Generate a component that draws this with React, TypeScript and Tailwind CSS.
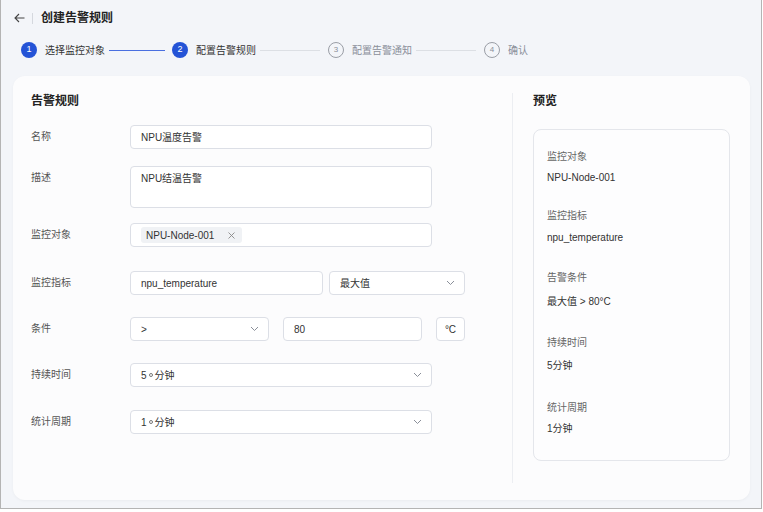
import React from 'react'

const font = { fontFamily: '"Liberation Sans", "Noto Sans CJK SC", sans-serif' }

function Chevron() {
  return (
    <svg width="9" height="6" viewBox="0 0 9 6" className="shrink-0">
      <polyline points="1,1 4.5,4.5 8,1" fill="none" stroke="#8a8f99" strokeWidth="1" />
    </svg>
  )
}

function Step({ n, label, state }: { n: number; label: string; state: 'done' | 'active' | 'todo' }) {
  const filled = state !== 'todo'
  return (
    <div className="flex items-center">
      <div
        className={
          filled
            ? 'w-[16px] h-[16px] rounded-full bg-[#2453d6] text-white text-[9px] flex items-center justify-center'
            : 'w-[16px] h-[16px] rounded-full border border-[#9a9ea6] text-[#8a8f99] text-[8px] flex items-center justify-center'
        }
      >
        {n}
      </div>
      <span className={`ml-[8px] text-[10px] ${filled ? 'text-[#333]' : 'text-[#8a8f99]'}`}>{label}</span>
    </div>
  )
}

function Row({ label, children, className }: { label: string; children: React.ReactNode; className: string }) {
  return (
    <div className={`flex ${className}`}>
      <div className="w-[99px] shrink-0 text-[10px] leading-[24px] text-[#555]">{label}</div>
      {children}
    </div>
  )
}

function Field({ children, width }: { children: React.ReactNode; width: string }) {
  return (
    <div className={`${width} h-[24px] border border-[#dcdfe6] rounded-[4px] bg-white pl-[10px] flex items-center text-[10px] text-[#333]`}>
      {children}
    </div>
  )
}

function Select({ children, width }: { children: React.ReactNode; width: string }) {
  return (
    <div className={`${width} h-[24px] border border-[#dcdfe6] rounded-[4px] bg-white pl-[10px] pr-[9px] flex items-center justify-between text-[10px] text-[#333]`}>
      <span className="flex items-center">{children}</span>
      <Chevron />
    </div>
  )
}

function Minutes({ n }: { n: number }) {
  return (
    <>
      {n}
      <span className="mx-[2px] w-[4px] h-[4px] rounded-full border border-[#777]" />
      分钟
    </>
  )
}

// label / value offsets follow the reference's uneven spacing
const preview = [
  { label: '监控对象', value: 'NPU-Node-001', lm: '', vm: 'mt-[7px]' },
  { label: '监控指标', value: 'npu_temperature', lm: 'mt-[24px]', vm: 'mt-[8px]' },
  { label: '告警条件', value: '最大值 > 80°C', lm: 'mt-[26px]', vm: 'mt-[10px]' },
  { label: '持续时间', value: '5分钟', lm: 'mt-[27px]', vm: 'mt-[9px]' },
  { label: '统计周期', value: '1分钟', lm: 'mt-[28px]', vm: 'mt-[7px]' },
]

export default function App() {
  return (
    <div className="w-[763px] h-[512px] bg-white" style={font}>
      <div className="w-[762px] h-[509px] border-l border-r border-b border-[#b4b4b4] bg-[#f3f5f9] flex flex-col">
        {/* header */}
        <div className="h-[36px] flex items-center pl-[13px] shrink-0">
          <svg width="11" height="10" viewBox="0 0 11 10">
            <path d="M5 1 L1 5 L5 9 M1 5 H10.5" fill="none" stroke="#444" strokeWidth="1.1" />
          </svg>
          <div className="w-px h-[11px] bg-[#d5d8de] ml-[7px] mr-[8px]" />
          <span className="text-[12px] font-semibold text-[#222]">创建告警规则</span>
        </div>

        {/* steps */}
        <div className="h-[28px] flex items-center pl-[20px] shrink-0">
          <Step n={1} label="选择监控对象" state="done" />
          <div className="ml-[4px] mr-[7px] w-[56px] h-px bg-[#4a6fe0]" />
          <Step n={2} label="配置告警规则" state="active" />
          <div className="ml-[4px] mr-[8px] w-[60px] h-px bg-[#dcdfe4]" />
          <Step n={3} label="配置告警通知" state="todo" />
          <div className="ml-[4px] mr-[8px] w-[60px] h-px bg-[#dcdfe4]" />
          <Step n={4} label="确认" state="todo" />
        </div>

        {/* card */}
        <div className="mt-[12px] ml-[12px] w-[737px] h-[424px] rounded-[12px] bg-[#fcfcfd] shadow-[0_1px_3px_rgba(0,0,0,0.04)] flex py-[17px]">
          <div className="w-[500px] shrink-0 pl-[18px] border-r border-[#eceef2]">
            <div className="h-[16px] leading-[16px] text-[12px] font-semibold text-[#222]">告警规则</div>

            <Row label="名称" className="mt-[16px]">
              <Field width="w-[302px]">NPU温度告警</Field>
            </Row>

            <Row label="描述" className="mt-[17px]">
              <div className="w-[302px] h-[42px] border border-[#dcdfe6] rounded-[4px] bg-white pl-[10px] pt-[6px] text-[10px] leading-[12px] text-[#333]">
                NPU结温告警
              </div>
            </Row>

            <Row label="监控对象" className="mt-[15px]">
              <div className="w-[302px] h-[24px] border border-[#dcdfe6] rounded-[4px] bg-white pl-[10px] flex items-center">
                <div className="h-[16px] rounded-[3px] bg-[#f0f2f5] pl-[5px] pr-[7px] flex items-center text-[10px] text-[#333]">
                  NPU-Node-001
                  <svg width="7" height="7" viewBox="0 0 7 7" className="ml-[14px]">
                    <path d="M0.5 0.5 L6.5 6.5 M6.5 0.5 L0.5 6.5" stroke="#888" strokeWidth="0.9" />
                  </svg>
                </div>
              </div>
            </Row>

            <Row label="监控指标" className="mt-[24px]">
              <div className="flex gap-[6px]">
                <Field width="w-[193px]">npu_temperature</Field>
                <Select width="w-[136px]">最大值</Select>
              </div>
            </Row>

            <Row label="条件" className="mt-[22px]">
              <div className="flex">
                <Select width="w-[139px]">&gt;</Select>
                <div className="ml-[14px]">
                  <Field width="w-[139px]">80</Field>
                </div>
                <div className="ml-[14px] w-[29px] h-[24px] border border-[#dcdfe6] rounded-[4px] bg-white flex items-center justify-center text-[10px] text-[#333]">
                  °C
                </div>
              </div>
            </Row>

            <Row label="持续时间" className="mt-[22px]">
              <Select width="w-[302px]"><Minutes n={5} /></Select>
            </Row>

            <Row label="统计周期" className="mt-[23px]">
              <Select width="w-[302px]"><Minutes n={1} /></Select>
            </Row>
          </div>

          <div className="pl-[20px]">
            <div className="h-[16px] leading-[16px] text-[12px] font-semibold text-[#222]">预览</div>
            <div className="mt-[20px] w-[197px] h-[332px] border border-[#e4e6eb] rounded-[8px] bg-[#fdfdfe] pl-[13px] pt-[20px]">
              {preview.map(p => (
                <div key={p.label} className={p.lm}>
                  <div className="text-[10px] leading-[14px] text-[#666]">{p.label}</div>
                  <div className={`${p.vm} text-[10px] leading-[14px] text-[#333]`}>{p.value}</div>
                </div>
              ))}
            </div>
          </div>
        </div>
      </div>
    </div>
  )
}
